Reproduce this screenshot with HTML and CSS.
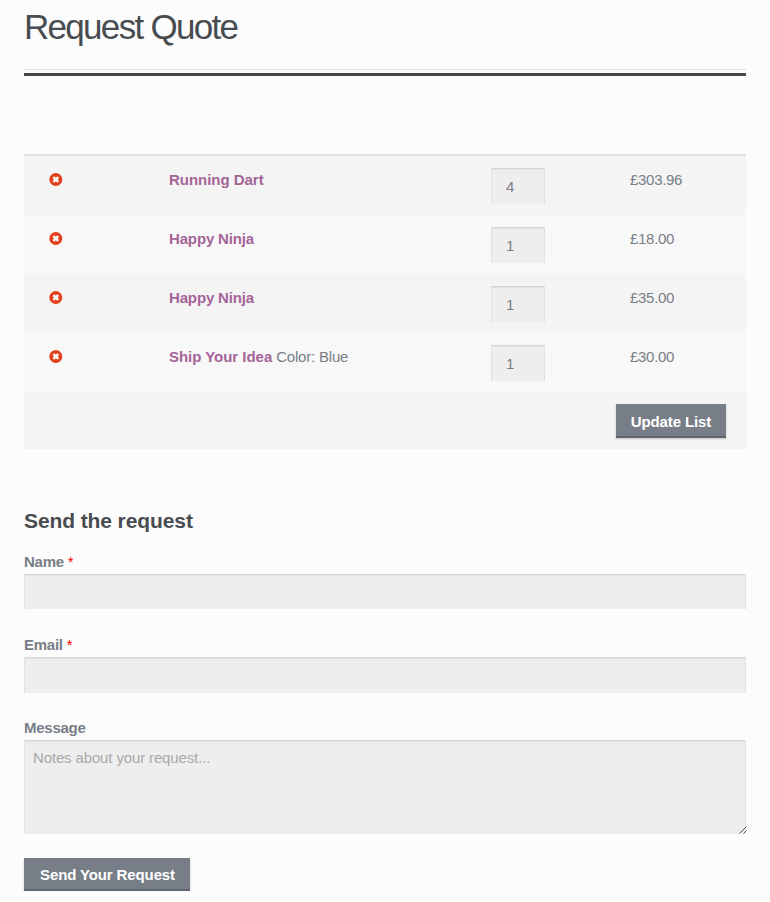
FILE: index.html
```html
<!DOCTYPE html>
<html lang="en">
<head>
<meta charset="utf-8">
<title>Request Quote</title>
<link rel="stylesheet" href="styles.css">
</head>
<body>
<svg class="defs" width="0" height="0" aria-hidden="true">
  <symbol id="remove" viewBox="0 0 14 14">
    <circle cx="6.8" cy="6.5" r="6.5" fill="#e2401c"/>
    <path d="M4.4 4.1L9.2 8.9M9.2 4.1L4.4 8.9" stroke="#fff" stroke-width="2.5"/>
  </symbol>
</svg>
<main class="page">
  <h1 class="title">Request Quote</h1>
  <form class="quote-list">
    <div class="row">
      <a class="remove"><svg width="14" height="14"><use href="#remove"/></svg></a>
      <div class="product"><a>Running Dart</a></div>
      <input class="qty" type="text" value="4">
      <span class="price">£303.96</span>
    </div>
    <div class="row">
      <a class="remove"><svg width="14" height="14"><use href="#remove"/></svg></a>
      <div class="product"><a class="tight">Happy Ninja</a></div>
      <input class="qty" type="text" value="1">
      <span class="price">£18.00</span>
    </div>
    <div class="row">
      <a class="remove"><svg width="14" height="14"><use href="#remove"/></svg></a>
      <div class="product"><a class="tight">Happy Ninja</a></div>
      <input class="qty" type="text" value="1">
      <span class="price">£35.00</span>
    </div>
    <div class="row">
      <a class="remove"><svg width="14" height="14"><use href="#remove"/></svg></a>
      <div class="product"><a>Ship Your Idea</a> Color: Blue</div>
      <input class="qty" type="text" value="1">
      <span class="price">£30.00</span>
    </div>
    <div class="actions"><button class="button update" type="button">Update List</button></div>
  </form>
  <form class="request">
    <h3 class="subtitle">Send the request</h3>
    <label for="name">Name <abbr>*</abbr></label>
    <input class="field name" id="name" type="text">
    <label for="email">Email <abbr>*</abbr></label>
    <input class="field" id="email" type="text">
    <label for="message">Message</label>
    <div class="message">
      <textarea class="field" id="message" placeholder="Notes about your request..."></textarea>
      <svg class="grip" width="8" height="8" viewBox="0 0 8 8"><path d="M0.5 7.5L7.5 0.5M4.5 7.5L7.5 4.5" stroke="#555" stroke-width="1" fill="none"/></svg>
    </div>
    <button class="button send" type="button">Send Your Request</button>
  </form>
</main>
</body>
</html>
```
FILE: styles.css
```css
* {
  box-sizing: border-box;
}

body {
  margin: 0;
  background: #fcfcfc;
  color: #787e87;
  font: 15px/24px "Liberation Sans", Arial, sans-serif;
}

.defs {
  display: block;
}

.page {
  width: 722px;
  margin: 0 24px;
}

.title {
  height: 76px;
  margin: 0 0 78px;
  padding-top: 7px;
  border-bottom: 3px solid #47484e;
  background: linear-gradient(#e2dfe2, #e2dfe2) 0 69px / 100% 1px no-repeat;
  color: #484c51;
  font-size: 35px;
  font-weight: 400;
  line-height: 40px;
  letter-spacing: -1.7px;
}

.quote-list {
  border-top: 2px solid #e0e0e0;
}

.row {
  display: grid;
  grid-template-columns: 120px 322px 139px 1fr;
  align-items: start;
  height: 59px;
  padding: 12px 0 0 25px;
  background: #f4f4f4;
}

.row:nth-child(even) {
  background: #f8f8f8;
}

.remove {
  height: 24px;
}

.remove svg {
  display: block;
  margin-top: 5px;
}

.product {
  letter-spacing: -0.2px;
}

.product a {
  color: #a46497;
  font-weight: 700;
  letter-spacing: -0.03px;
}

.product .tight {
  letter-spacing: -0.15px;
}

.price {
  letter-spacing: -0.3px;
}

.qty,
.field {
  display: block;
  margin: 0;
  border: 0;
  border-radius: 0;
  background: #eee;
  box-shadow: inset 1px 0 0 #e1e1e1, inset -1px 0 0 #e1e1e1, inset 0 1px 0 #d5d5d5, inset 0 2px 0 #e2e2e2;
  color: #787e87;
  font: inherit;
  outline: 0;
}

.qty {
  width: 54px;
  height: 36px;
  padding: 0 15px;
}

.actions {
  display: flex;
  justify-content: flex-end;
  height: 57px;
  padding: 12px 20px 0 0;
  background: #f4f4f4;
}

.button {
  display: block;
  padding: 0;
  border: 0;
  background: #787e87;
  box-shadow: inset 0 -2px 0 #60646c, 0 1px 2px rgba(0, 0, 0, 0.2);
  color: #fff;
  font: 700 15px/34px "Liberation Sans", Arial, sans-serif;
  letter-spacing: -0.12px;
}

.update {
  width: 110px;
  height: 34px;
  padding-top: 1px;
}

.subtitle {
  margin: 0;
  padding: 57px 0 18px;
  color: #484c51;
  font-size: 21px;
  line-height: 30px;
  letter-spacing: -0.1px;
}

.request label {
  display: block;
  height: 20px;
  font-weight: 700;
  line-height: 16px;
  letter-spacing: -0.25px;
}

.request abbr {
  color: #f00;
  font-weight: 400;
}

.field {
  width: 100%;
  height: 36px;
  margin-bottom: 27px;
}

.field.name {
  height: 35px;
  margin-bottom: 28px;
}

.message {
  position: relative;
  height: 94px;
  margin-bottom: 24px;
}

textarea.field {
  height: 94px;
  padding: 6px 9px;
  resize: none;
}

.field::placeholder {
  color: #a9a9a9;
  letter-spacing: -0.14px;
  opacity: 1;
}

.grip {
  position: absolute;
  right: -1px;
  bottom: 0;
}

.send {
  width: 166px;
  height: 33px;
  padding-left: 1px;
}
```
